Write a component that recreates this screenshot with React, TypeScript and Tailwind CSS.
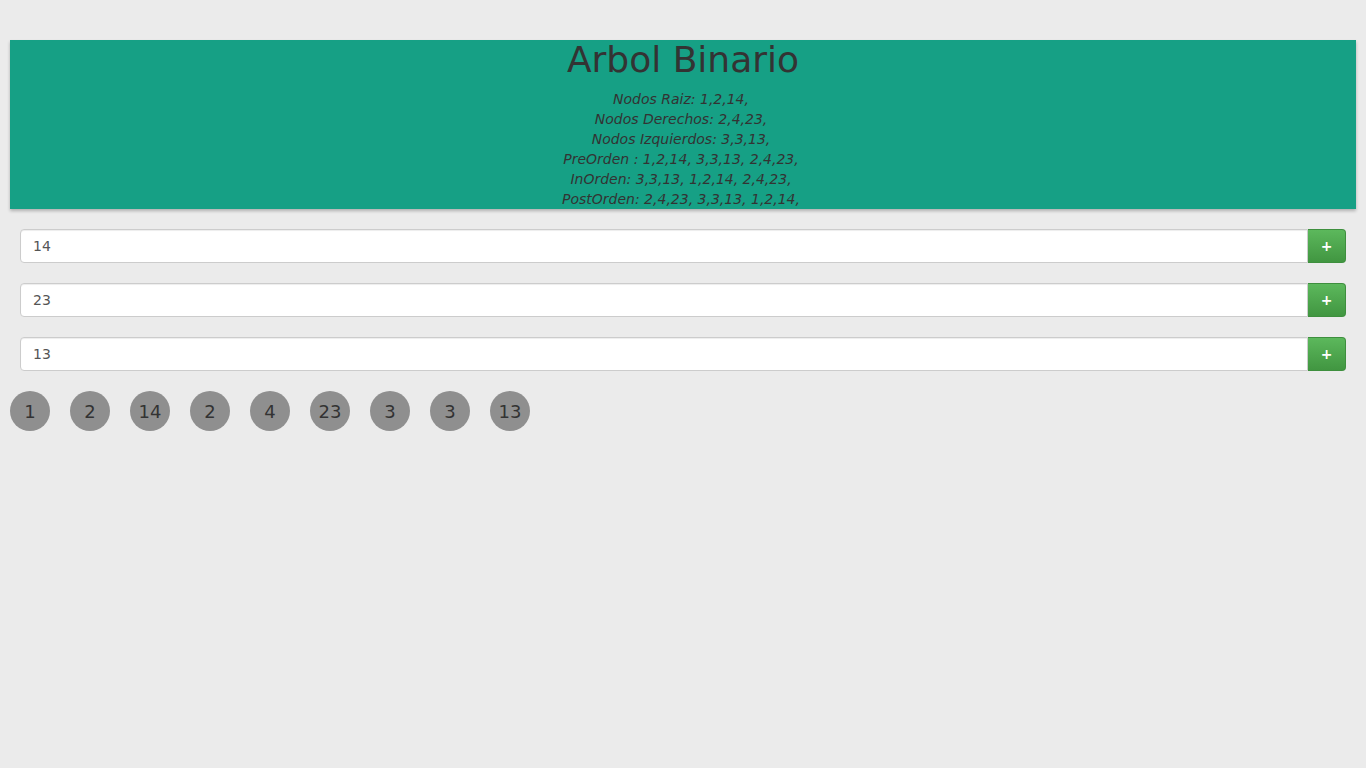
import React from 'react';

const lines = [
  'Nodos Raiz: 1,2,14,',
  'Nodos Derechos: 2,4,23,',
  'Nodos Izquierdos: 3,3,13,',
  'PreOrden : 1,2,14, 3,3,13, 2,4,23,',
  'InOrden: 3,3,13, 1,2,14, 2,4,23,',
  'PostOrden: 2,4,23, 3,3,13, 1,2,14,',
];

const inputs = ['14', '23', '13'];
const nodes = ['1', '2', '14', '2', '4', '23', '3', '3', '13'];

export default function App() {
  return (
    <div className="min-h-[768px] bg-[#ebebeb] px-[10px] pt-[40px] font-['DejaVu_Sans',sans-serif] text-[#333]">
      {/* Header */}
      <div className="bg-[#16a085] text-center shadow-[0_2px_3px_rgba(0,0,0,0.25)]">
        <h1 className="text-[36px] leading-[40px] mb-[9px]">Arbol Binario</h1>
        <div className="text-[14px] leading-[20px] italic pr-[4px]">
          {lines.map((l) => (
            <div key={l}>{l}</div>
          ))}
        </div>
      </div>

      {/* Inputs */}
      <div className="px-[10px] pt-[20px] flex flex-col gap-[20px]">
        {inputs.map((v, i) => (
          <div key={i} className="flex h-[34px]">
            <input
              defaultValue={v}
              className="flex-1 h-full bg-white border border-[#ccc] rounded-l-[4px] px-[12px] text-[14px] text-[#555] outline-none font-['DejaVu_Sans',sans-serif] shadow-[inset_0_1px_1px_rgba(0,0,0,0.075)]"
            />
            <button className="w-[38px] h-full bg-gradient-to-b from-[#5cb85c] to-[#419641] border border-[#3e8f3e] border-l-0 rounded-r-[4px] text-white font-bold text-[14px] flex items-center justify-center">
              +
            </button>
          </div>
        ))}
      </div>

      {/* Nodes */}
      <div className="flex gap-[20px] pt-[20px]">
        {nodes.map((n, i) => (
          <div
            key={i}
            className="w-[40px] h-[40px] rounded-full bg-[#8f8f8f] flex items-center justify-center text-[18px] text-[#333]"
          >
            {n}
          </div>
        ))}
      </div>
    </div>
  );
}
